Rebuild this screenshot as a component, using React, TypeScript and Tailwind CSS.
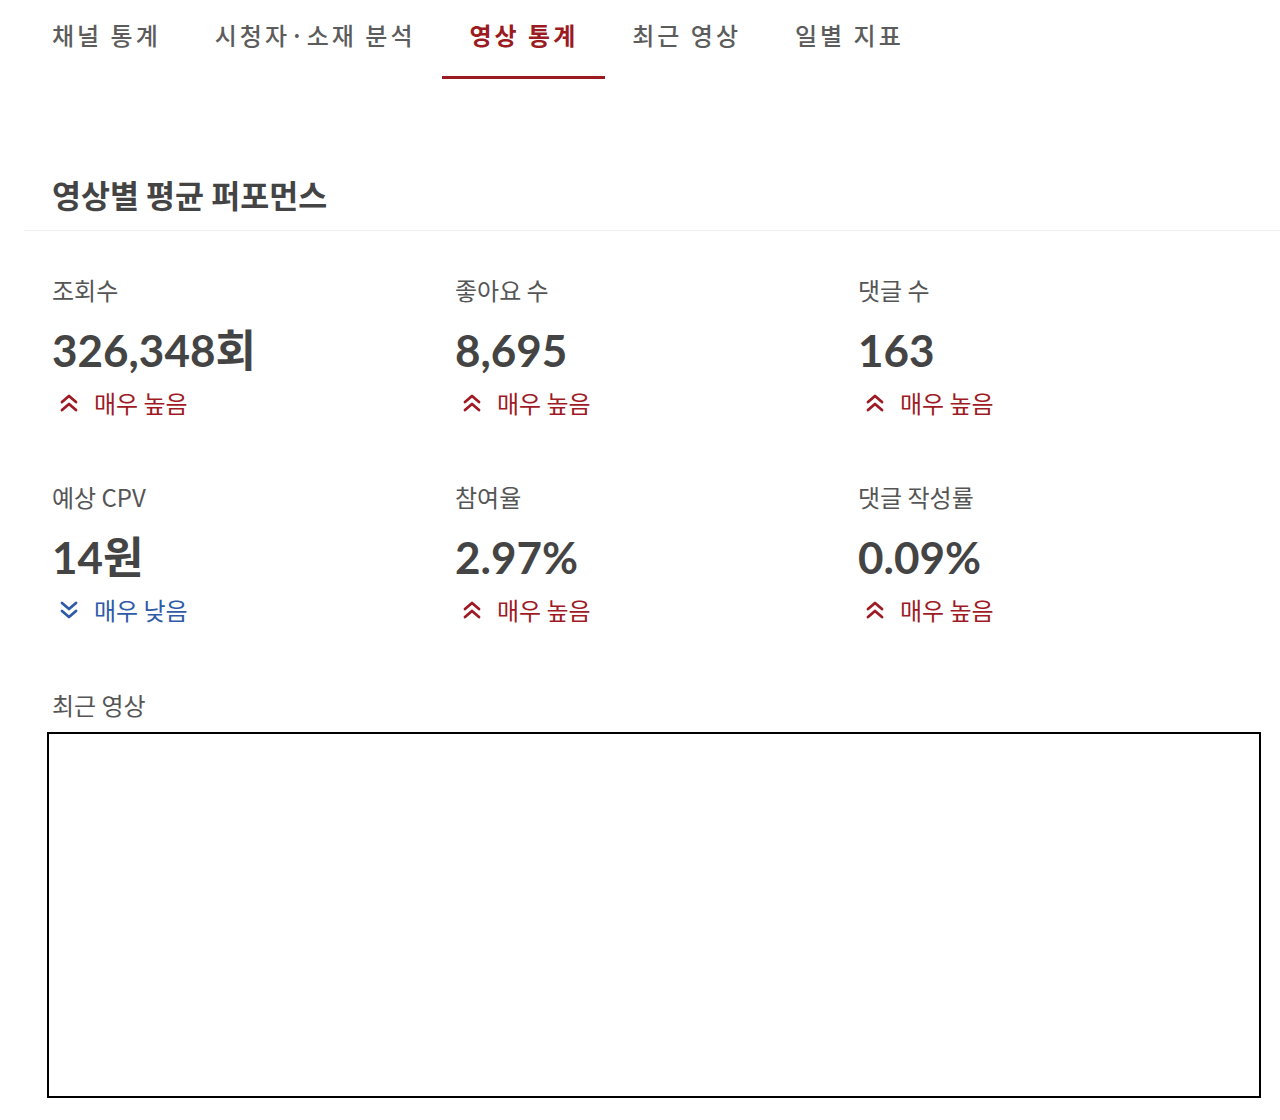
import React from "react";

const KR = '"Noto Sans CJK KR", "Noto Sans", sans-serif';
const NUM = 'Lato, "Noto Sans CJK KR", sans-serif';

const tabs = ["채널 통계", "시청자·소재 분석", "영상 통계", "최근 영상", "일별 지표"];

type Stat = { label: string; value: string; up: boolean };
const stats: Stat[] = [
  { label: "조회수", value: "326,348회", up: true },
  { label: "좋아요 수", value: "8,695", up: true },
  { label: "댓글 수", value: "163", up: true },
  { label: "예상 CPV", value: "14원", up: false },
  { label: "참여율", value: "2.97%", up: true },
  { label: "댓글 작성률", value: "0.09%", up: true },
];

function Chevrons({ up }: { up: boolean }) {
  return (
    <svg width="18" height="18" viewBox="0 0 18 18" fill="none" stroke="currentColor" strokeWidth="2.8" strokeLinecap="round" strokeLinejoin="round">
      {up ? (
        <>
          <path d="M2 8 L9 2 L16 8" />
          <path d="M2 16 L9 10 L16 16" />
        </>
      ) : (
        <>
          <path d="M2 2 L9 8 L16 2" />
          <path d="M2 10 L9 16 L16 10" />
        </>
      )}
    </svg>
  );
}

export default function App() {
  return (
    <div className="w-[1280px] min-h-[1120px] bg-white" style={{ fontFamily: KR }}>
      <nav className="flex pl-[25px]">
        {tabs.map((t, i) => {
          const active = i === 2;
          return (
            <div
              key={t}
              className={
                active
                  ? "px-[27px] pt-[21px] pb-[27px] border-b-[3px] border-[#9b1b22] text-[#9b1b22] font-bold text-[24px] leading-[28px] tracking-[3px]"
                  : "px-[27px] pt-[21px] pb-[27px] border-b-[3px] border-transparent text-[#5c5c5c] font-medium text-[24px] leading-[28px] tracking-[3px]"
              }
            >
              {t}
            </div>
          );
        })}
      </nav>

      <div className="ml-[24px] mt-[97px] pl-[28px] pb-[17px] border-b border-[#f0f0f0]">
        <h2 className="text-[31.5px] leading-[37px] font-bold text-[#444]">영상별 평균 퍼포먼스</h2>
      </div>

      <div className="pl-[52px] pt-[44px] grid grid-cols-[403px_403px_403px] gap-y-[64px]">
        {stats.map((s) => (
          <div key={s.label} className="flex flex-col">
            <div className="text-[24px] leading-[30px] text-[#555]">{s.label}</div>
            <div
              className="mt-[20px] text-[44px] leading-[50px] font-bold text-[#444]"
              style={{ fontFamily: NUM }}
            >
              {s.value}
            </div>
            <div
              className={
                s.up
                  ? "mt-[13px] flex items-center gap-[16px] pl-[8px] text-[24px] leading-[30px] text-[#9e1a24]"
                  : "mt-[13px] flex items-center gap-[16px] pl-[8px] text-[24px] leading-[30px] text-[#2f5aa8]"
              }
            >
              <Chevrons up={s.up} />
              <span>{s.up ? "매우 높음" : "매우 낮음"}</span>
            </div>
          </div>
        ))}
      </div>

      <div className="pl-[52px] mt-[65px] text-[24px] leading-[30px] text-[#555]">최근 영상</div>
      <div className="ml-[47px] mt-[12px] w-[1214px] h-[366px] border-2 border-black bg-white" />
    </div>
  );
}
